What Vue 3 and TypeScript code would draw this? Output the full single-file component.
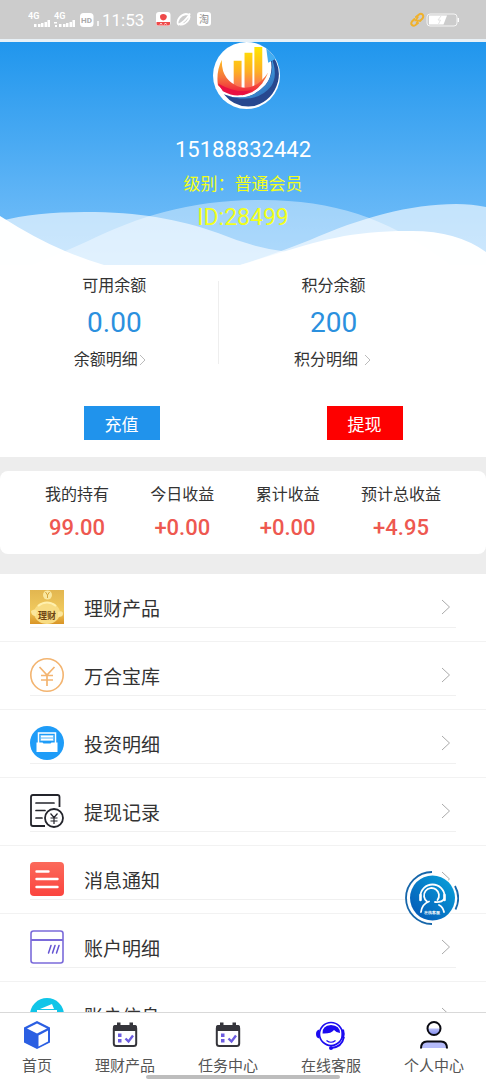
<script setup lang="ts">
interface Stat { label: string; value: string }
interface Entry { icon: string; label: string }

const stats: Stat[] = [
  { label: '我的持有', value: '99.00' },
  { label: '今日收益', value: '+0.00' },
  { label: '累计收益', value: '+0.00' },
  { label: '预计总收益', value: '+4.95' },
]

const menu: Entry[] = [
  { icon: 'gold', label: '理财产品' },
  { icon: 'yen', label: '万合宝库' },
  { icon: 'invest', label: '投资明细' },
  { icon: 'record', label: '提现记录' },
  { icon: 'message', label: '消息通知' },
  { icon: 'account', label: '账户明细' },
  { icon: 'info', label: '账户信息' },
]

const tabs: Entry[] = [
  { icon: 'cube', label: '首页' },
  { icon: 'calendar', label: '理财产品' },
  { icon: 'calendar', label: '任务中心' },
  { icon: 'service', label: '在线客服' },
  { icon: 'person', label: '个人中心' },
]
</script>

<template>
  <div class="screen">
    <header class="status">
      <div class="status-left">
        <svg width="66" height="18" viewBox="0 0 66 18" fill="#fff">
          <text x="0" y="8" class="tiny">4G</text>
          <path d="M6 13h2.500v3H6zM10 13h2.500v3H10zM13 12h2.500v4H13zM16.500 11h2.500v5h-2.500zM19.500 9h2.500v7h-2.500z" />
          <text x="26" y="8" class="tiny">4G</text>
          <path d="M26 11h3v1.500h-3zM27 14h2v2h-2zM31 13h2.500v3H31zM35 13h2.500v3H35zM38 12h2.500v4H38zM41.500 11h2.500v5h-2.500zM44.500 9h2.500v7h-2.500z" />
          <rect x="52" y="2" width="13.500" height="14" rx="3.500" />
          <text x="53" y="12" class="hd">HD</text>
        </svg>
        <svg width="4" height="18" viewBox="0 0 4 18"><path d="M2 10v5" stroke="#fff" stroke-width="1.500" /></svg>
        <time class="clock">11:53</time>
        <svg class="apps" width="56" height="15" viewBox="0 0 56 15">
          <rect width="14.500" height="14" rx="3" fill="#fff" />
          <path d="M4 4.500q0-2.500 3.200-2.500t3.600 2.500q0 3.500-3.600 4Q4 8 4 4.500z" fill="#ee4a4a" />
          <path d="M.5 10h13.500v2q0 1.500-2 1.500H2.500Q.5 13.500.5 12z" fill="#ee4a4a" />
          <path d="M4 12.500l1-1.500 1 1.500M8.500 12.500l1-1.500 1 1.500" stroke="#fff" stroke-width=".8" fill="none" />
          <path d="M22 12.500c-1.500-4 2-9.500 8-10.500 3 0 4.500 2 3 5-2 4-6 6-9 5.500M22 13q7-3 12-11.500" stroke="#fff" stroke-width="1.800" fill="none" />
          <rect x="41" width="14" height="14" rx="3" fill="#fff" />
          <text x="43" y="11" class="tao">淘</text>
        </svg>
      </div>
      <svg class="power" width="49" height="16" viewBox="0 0 49 16" fill="none">
        <g stroke="#f0b12b" stroke-width="2" stroke-linecap="round">
          <path d="M6 5l3-2.500q2-1.500 3.500 0t0 4L10 9M8 11l-2.500 2q-2 1.500-3.500 0t0-3.500L4.500 7" />
          <path d="M8 5L5.500 8.500h3L6.500 11" stroke-width="1.500" />
        </g>
        <rect x="17" y="2" width="30" height="12" rx="3" stroke="#f4f4f4" />
        <path d="M19 3.500h18l-3.500 9H19z" fill="#fff" />
        <path d="M31 4l-3 4h2.500l-2 4" stroke="#e4e4e4" />
        <path d="M48.300 6v4" stroke="#fff" stroke-width="1.400" />
      </svg>
    </header>

    <main class="content">
      <section class="hero">
        <svg class="waves" viewBox="0 0 486 66" preserveAspectRatio="none" fill="#fff">
          <path opacity=".4" d="M32 66Q64 53 88 42C140 17 190 1 262 1C340 1 395 23 450 66z" />
          <path opacity=".62" d="M0 22Q35 13 85 13C140 13 178 20 218 34Q254 49 288 53L330 66H0z" />
          <path opacity=".62" d="M240 66Q275 55 310 41C360 19 410 5 456 5Q472 5 486 8V66z" />
          <path opacity=".98" d="M0 17Q36 40 65 52Q84 60 104 66H0zM240 66C310 45 340 32 408 32Q456 31 486 53V66z" />
        </svg>
        <svg class="logo" viewBox="0 0 68 68">
          <defs>
            <linearGradient id="bar" x1="0" y1="0" x2="0" y2="1"><stop offset="0" stop-color="#ffe600" /><stop offset=".55" stop-color="#fdae25" /><stop offset="1" stop-color="#fa5a6a" /></linearGradient>
            <linearGradient id="bowl" x1="0" y1="0" x2="0" y2="1"><stop offset="0" stop-color="#ffbe20" /><stop offset=".5" stop-color="#f5743c" /><stop offset="1" stop-color="#ef123c" /></linearGradient>
            <linearGradient id="sea" x1="0" y1="0" x2="1" y2="1"><stop offset="0" stop-color="#69baf1" /><stop offset=".6" stop-color="#3f97dc" /><stop offset="1" stop-color="#2a62ad" /></linearGradient>
          </defs>
          <circle cx="34" cy="34" r="34" fill="#fff" />
          <path d="M11 53Q35 63 53 44Q64 31 56 8Q70 23 66 40Q61 59 42 65Q23 68 11 53z" fill="#27488f" />
          <path d="M12 54Q37 62 54 43Q64 29 58 13Q67 33 59 45Q44 64 12 54z" fill="url(#sea)" />
          <path d="M54 6l10 11-8 4z" fill="#43adf2" />
          <g fill="url(#bar)"><path d="M21 19h8v31h-8zM32 11h8v40h-8zM42 5h8v37l-8 7z" /></g>
          <path d="M9 18Q8 39 28 46Q44 49 56 31Q48 51 30 54Q13 54 5 44Q3 30 9 18z" fill="url(#bowl)" />
          <path d="M5 42Q25 53 39 49Q27 59 10 50z" fill="#e91041" />
        </svg>
        <p class="phone">15188832442</p>
        <p class="level">级别：普通会员</p>
        <p class="uid">ID:28499</p>
      </section>

      <section class="balance">
        <div class="columns">
          <div class="column divided">
            <span class="caption">可用余额</span>
            <strong class="amount">0.00</strong>
            <a class="detail" href="#balance">余额明细<svg width="9" height="14" viewBox="0 0 9 14"><path d="M2 2l5 5-5 5" /></svg></a>
          </div>
          <div class="column">
            <span class="caption">积分余额</span>
            <strong class="amount">200</strong>
            <a class="detail spaced" href="#points">积分明细<svg width="9" height="14" viewBox="0 0 9 14"><path d="M2 2l5 5-5 5" /></svg></a>
          </div>
        </div>
        <div class="actions">
          <div><button type="button" class="btn">充值</button></div>
          <div><button type="button" class="btn withdraw">提现</button></div>
        </div>
      </section>

      <section class="stats">
        <div v-for="s in stats" :key="s.label" class="stat">
          <span>{{ s.label }}</span>
          <b>{{ s.value }}</b>
        </div>
      </section>

      <ul class="menu">
        <li v-for="m in menu" :key="m.label">
          <a :href="'#' + m.icon">
            <svg class="icon" viewBox="0 0 34 34" fill="none">
              <template v-if="m.icon === 'gold'">
                <defs><linearGradient id="gold" x1="0" y1="0" x2="0" y2="1"><stop offset="0" stop-color="#e2b650" /><stop offset=".6" stop-color="#f0c95d" /><stop offset="1" stop-color="#d99425" /></linearGradient></defs>
                <path d="M0 0h34v34H0z" fill="url(#gold)" />
                <ellipse cx="17" cy="23" rx="13" ry="11" fill="#f8dc83" />
                <path d="M1 21q4-3 6 0l-1 5q-5 0-5-5zM28 22q5-2 5 2 0 3-5 3z" fill="#fbe69b" />
                <path d="M8 16q9-7 18 0" stroke="#fff0ad" stroke-width="2" />
                <circle cx="17.500" cy="5" r="4.500" fill="#f9e79f" />
                <path d="M15.500 2l2 3 2-3M17.500 5v3" stroke="#d6a43a" />
                <text x="8" y="29" class="gold-text">理财</text>
              </template>
              <template v-else-if="m.icon === 'yen'">
                <circle cx="17" cy="17" r="16.200" stroke="#f3b470" stroke-width="1.600" />
                <path d="M9.500 9l7.500 8 7.500-8M17 17v11M11 17.500h12M11 22h12" stroke="#f3b470" stroke-width="1.700" />
              </template>
              <template v-else-if="m.icon === 'invest'">
                <circle cx="17" cy="17" r="17" fill="#1e9cf8" />
                <path d="M8.500 17V7h17v10" stroke="#fff" stroke-width="1.500" />
                <path d="M10.500 9h13v6h-13z" fill="#a9dafc" />
                <path d="M11 10.500h12M11 13.500h12" stroke="#fff" />
                <path d="M6.500 16.500h6l1 1h7l1-1h6V26h-21z" fill="#fff" />
              </template>
              <template v-else-if="m.icon === 'record'">
                <path d="M29.500 13V3Q29.500 1 27.500 1H3Q1 1 1 3v27q0 2 2 2h12" stroke="#23242b" stroke-width="1.800" />
                <path d="M6 9h18M6 16.500h9M6 24h6" stroke="#23242b" stroke-width="1.700" stroke-linecap="round" />
                <circle cx="24" cy="24" r="9" stroke="#23242b" stroke-width="1.800" />
                <path d="M20.500 19.500l3.500 4 3.500-4M24 23.500V30M20.500 24h7M20.500 27h7" stroke="#23242b" stroke-width="1.200" />
              </template>
              <template v-else-if="m.icon === 'message'">
                <defs><linearGradient id="msg" x1="0" y1="0" x2="0" y2="1"><stop stop-color="#fb6a5b" /><stop offset="1" stop-color="#fb443e" /></linearGradient></defs>
                <rect width="34" height="34" rx="4" fill="url(#msg)" />
                <path d="M6.500 9.500h12M6.500 17h21M6.500 25h21" stroke="#fff" stroke-width="2.400" stroke-linecap="round" />
              </template>
              <template v-else-if="m.icon === 'account'">
                <rect x="1" y="1" width="32" height="32" rx="2.500" stroke="#7b6bda" stroke-width="1.600" />
                <path d="M1 10h32" stroke="#7b6bda" stroke-width="2" />
                <path d="M21 15.500L18.500 23M25 15.500L22.500 23M29 15.500L26.500 23" stroke="#6454d3" stroke-width="1.500" stroke-linecap="round" />
              </template>
              <template v-else>
                <circle cx="17" cy="17" r="17" fill="#10c5e8" />
                <path d="M7 12h20v14H7z" fill="#fff" />
                <path d="M10 11l12-5 2 5z" fill="#fff" />
                <path d="M10 17h14M10 21h10" stroke="#10c5e8" stroke-width="1.500" />
              </template>
            </svg>
            <span>{{ m.label }}</span>
            <svg class="arrow" width="10" height="16" viewBox="0 0 10 16"><path d="M1 1l7.500 7L1 15" /></svg>
          </a>
        </li>
      </ul>
    </main>

    <button type="button" class="support" aria-label="在线客服">
      <svg viewBox="0 0 54 54" fill="none">
        <defs><linearGradient id="help" x1="1" y1="0" x2="0" y2="1"><stop stop-color="#08a5dc" /><stop offset="1" stop-color="#0553b4" /></linearGradient></defs>
        <circle cx="27" cy="27" r="24" fill="#fff" />
        <circle cx="27.500" cy="27" r="22.500" fill="url(#help)" />
        <path d="M27 1A26 26 0 0 0 27 53" stroke="#1666aa" stroke-width="1.800" />
        <path d="M50 15A26 26 0 0 1 50.500 38.500" stroke="#1666aa" stroke-width="1.800" />
        <g stroke="#fff" stroke-width="1.800" stroke-linecap="round">
          <path d="M22 30.500a7.500 7.500 0 1 1 10.500-1.500M15.500 29v-4a12 11.500 0 0 1 24 0V29M39 28q-2 3.500-9 3" />
          <path d="M16 41q1-8 8-10.500M34 34q4 2 5 7" />
          <path d="M15.500 24v5M39.500 24v5" stroke-width="2.400" />
        </g>
        <text x="18.500" y="43" class="help-text">在线客服</text>
      </svg>
    </button>

    <nav class="tabs">
      <a v-for="t in tabs" :key="t.label" :href="'#' + t.label">
        <svg viewBox="0 0 30 30" fill="none">
          <template v-if="t.icon === 'cube'">
            <path d="M15 1l13 6.500v15L15 29 2 22.500v-15z" fill="#2b5fe2" />
            <path d="M15 3.500l10 5-10 5-10-5z" fill="#fff" />
            <path d="M16.500 15.500L26 10.500v11l-9.500 5z" fill="#fff" />
          </template>
          <template v-else-if="t.icon === 'calendar'">
            <rect x="3.800" y="6" width="22.400" height="20" rx="2.500" fill="#fff" stroke="#35353b" stroke-width="2" />
            <path d="M3 11V7q0-2 2-2h2V2.500h3.500V5h9V2.500H23V5h2q2 0 2 2v4z" fill="#35353b" />
            <path d="M8 13.500h3.500V17H8zM8 19h3.500v3.500H8z" fill="#6c5ce0" />
            <path d="M15.500 18.500l3 3 4.500-6" stroke="#6c5ce0" stroke-width="2.400" />
          </template>
          <template v-else-if="t.icon === 'service'">
            <circle cx="15" cy="14" r="11.500" stroke="#1b0af0" stroke-width="1.600" />
            <path d="M6.500 13.500Q6 5.500 15 5q9 .500 9 8-4-.5-6-3-3 4-11.500 3.500z" fill="#1b0af0" />
            <path d="M3.500 9.500v9Q0 18 0 14t3.500-4.500zM25.500 9.500H28q1.500 4.500 0 9h-2.500z" fill="#1b0af0" />
            <path d="M10.500 20.500q4.500 3.500 9 0" stroke="#1b0af0" stroke-width="1.200" />
            <path d="M28 17q-2 10-12.500 11" stroke="#1b0af0" stroke-width="1.800" />
            <circle cx="15" cy="28" r="2" fill="#1b0af0" />
          </template>
          <template v-else>
            <defs><linearGradient id="me" x1="0" y1="0" x2="0" y2="1"><stop offset=".45" stop-color="#fff" /><stop offset=".55" stop-color="#b5bbfa" /><stop offset="1" stop-color="#7c87ec" /></linearGradient></defs>
            <circle cx="15" cy="8.500" r="6.500" fill="url(#me)" stroke="#0a0a12" stroke-width="2" />
            <path d="M3 28q0-6 5-6h14q5 0 5 6z" fill="#b5bbfa" />
            <path d="M2 28.500Q2 21.500 8 21.500h14q6 0 6 7" stroke="#0a0a12" stroke-width="2" />
          </template>
        </svg>
        <span>{{ t.label }}</span>
      </a>
      <i class="home-bar"></i>
    </nav>
  </div>
</template>

<style>
body {
  margin: 0;
}
</style>

<style scoped>
.screen {
  position: relative;
  display: flex;
  flex-direction: column;
  height: 100vh;
  overflow: hidden;
  background: #ededed;
  color: #333;
  font-family: Roboto, "Noto Sans CJK SC", sans-serif;
}
a {
  color: inherit;
  text-decoration: none;
}
p {
  margin: 0;
}
.status {
  flex: none;
  box-sizing: border-box;
  height: 42px;
  padding: 0 27px 0 28px;
  display: flex;
  justify-content: space-between;
  align-items: center;
  background: #ccc;
  border-bottom: 3px solid #e8f1f7;
}
.status-left {
  display: flex;
  align-items: center;
  gap: 2px;
}
.tiny {
  font-size: 9px;
  font-weight: 700;
}
.hd {
  font-size: 8px;
  font-weight: 700;
  fill: #aaa;
}
.tao {
  font-size: 10px;
  fill: #888;
}
.clock {
  color: #fff;
  font-size: 17px;
  line-height: 20px;
}
.apps {
  margin-left: 10px;
}
.content {
  flex: 1;
  min-height: 0;
  overflow-y: auto;
  scrollbar-width: none;
}
.hero {
  position: relative;
  display: flex;
  flex-direction: column;
  align-items: center;
  padding-bottom: 30px;
  background: linear-gradient(#2096ed, #7cc2fa);
  text-align: center;
}
.waves {
  position: absolute;
  left: 0;
  bottom: 0;
  width: 100%;
  height: 66px;
}
.logo {
  width: 67px;
  height: 67px;
  margin: 0 0 24px 7px;
}
.phone,
.level,
.uid {
  position: relative;
  line-height: 34px;
}
.phone {
  color: #fff;
  font-size: 22px;
}
.level {
  color: #f2ff1c;
  font-size: 17px;
}
.uid {
  color: #f2ff1c;
  font-size: 23px;
}
.balance {
  background: #fff;
  padding: 16px 0 17px;
}
.columns {
  display: flex;
}
.column {
  box-sizing: border-box;
  width: 45%;
  height: 83px;
  padding-left: 11px;
  display: flex;
  flex-direction: column;
  align-items: center;
}
.divided {
  border-right: 1px solid #eee;
}
.caption,
.detail {
  font-size: 16px;
  line-height: 10px;
}
.amount {
  margin: 16px 0;
  color: #2b90de;
  font-size: 28px;
  font-weight: 400;
  line-height: 32px;
}
.detail {
  display: flex;
  align-items: center;
  height: 10px;
  padding-right: 8px;
}
.spaced {
  gap: 5px;
  padding-right: 1px;
}
.detail path,
.arrow path {
  fill: none;
  stroke: #bbb;
  stroke-width: 1;
}
.actions {
  display: grid;
  grid-template-columns: 1fr 1fr;
  justify-items: center;
  margin-top: 42px;
}
.btn {
  display: block;
  width: 76px;
  height: 34px;
  padding: 0;
  border: 0;
  background: #2093ec;
  color: #fff;
  font: inherit;
  font-size: 17px;
}
.withdraw {
  background: #fe0000;
}
.stats {
  display: flex;
  justify-content: space-between;
  margin: 14px 0 20px;
  padding: 9px 45px 8px;
  border-radius: 8px;
  background: #fff;
}
.stat {
  display: flex;
  flex-direction: column;
  align-items: center;
  font-size: 16px;
  line-height: 30px;
}
.stat b {
  color: #ee5850;
  font-size: 22px;
  font-weight: 500;
  line-height: 36px;
}
.menu {
  list-style: none;
  margin: 0;
  padding: 0;
  background: #fff;
}
.menu li {
  padding: 0 30px 13px;
  border-bottom: 1px solid #f2f2f2;
}
.menu a {
  display: flex;
  align-items: center;
  height: 40px;
  padding: 13px 5px 0 0;
  border-bottom: 1px solid #f0f0f0;
  font-size: 19px;
}
.menu span {
  flex: 1;
}
.icon {
  width: 34px;
  height: 34px;
  margin-right: 20px;
}
.arrow path {
  stroke: #aaa;
}
.gold-text {
  font-size: 9px;
  font-weight: 700;
  fill: #6e4512;
}
.support {
  position: absolute;
  right: 27px;
  bottom: 155px;
  width: 54px;
  height: 54px;
  padding: 0;
  border: 0;
  border-radius: 50%;
  background: none;
}
.support svg {
  display: block;
}
.help-text {
  font-size: 4px;
  font-weight: 700;
  fill: #fff;
}
.tabs {
  position: relative;
  flex: none;
  box-sizing: border-box;
  height: 68px;
  padding: 7px 22px 0;
  display: flex;
  justify-content: space-between;
  background: #fff;
  border-top: 1px solid #d9d9d9;
}
.tabs a {
  display: flex;
  flex-direction: column;
  align-items: center;
  color: #555;
  font-size: 15px;
  line-height: 32px;
}
.tabs svg {
  flex: none;
  width: 30px;
  height: 30px;
}
.home-bar {
  position: absolute;
  left: 30%;
  right: 30%;
  bottom: 1px;
  height: 4px;
  border-radius: 2px;
  background: #bdbdbd;
}
</style>
